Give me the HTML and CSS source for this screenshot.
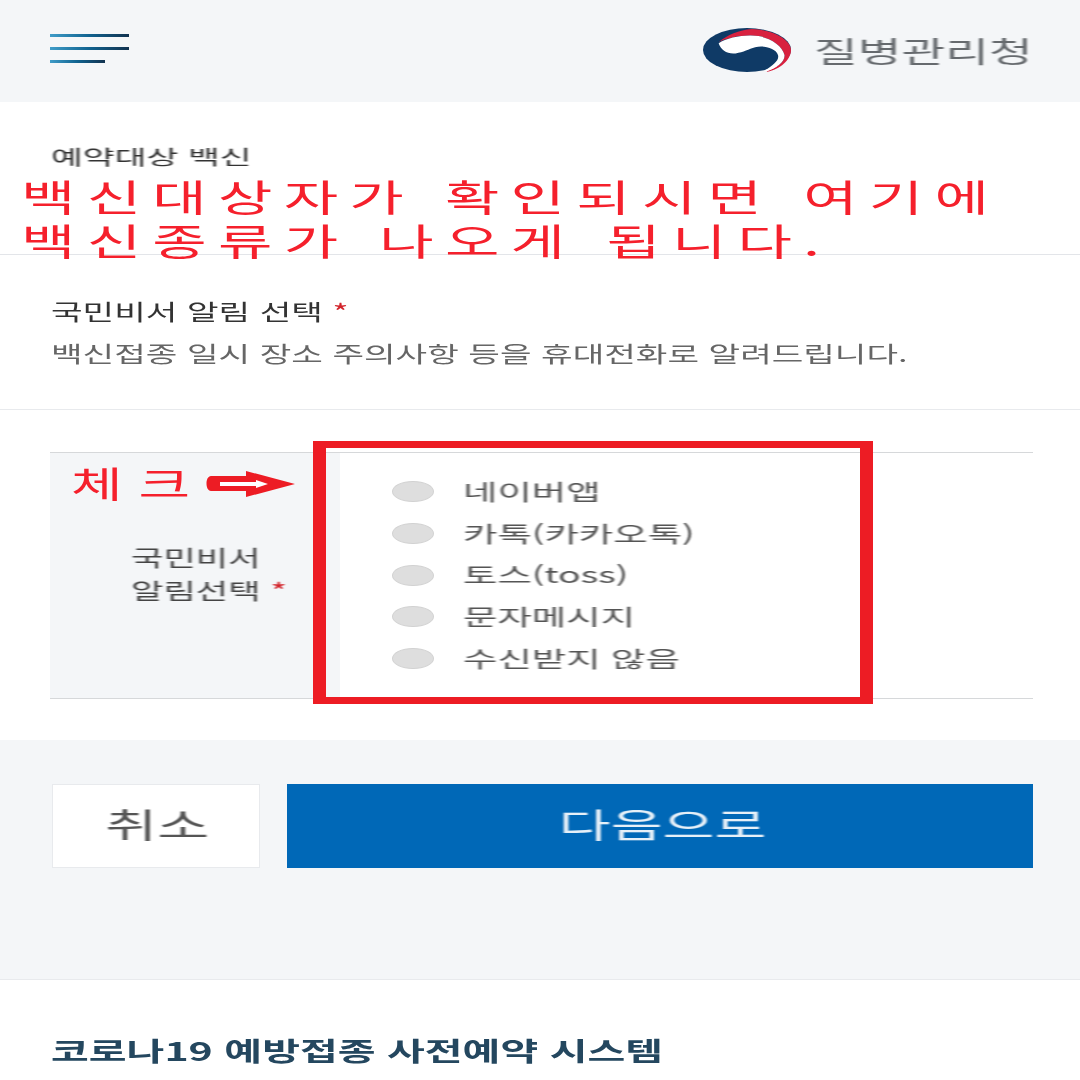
FILE: index.html
```html
<!DOCTYPE html>
<html lang="ko">
<head>
    <meta charset="UTF-8">
    <title>코로나19 예방접종 사전예약 시스템</title>
    <link rel="stylesheet" href="styles.css">
</head>
<body>
    <header class="top">
        <svg class="menu" viewBox="0 0 80 32" width="80" height="32">
            <defs>
                <linearGradient id="bar">
                    <stop offset="0" stop-color="#3f9cc8"/>
                    <stop offset="0.5" stop-color="#10628f"/>
                    <stop offset="1" stop-color="#12324f"/>
                </linearGradient>
            </defs>
            <rect x="0" y="1" width="79" height="3" fill="url(#bar)"/>
            <rect x="0" y="14" width="79" height="3" fill="url(#bar)"/>
            <rect x="0" y="27" width="55" height="3" fill="url(#bar)"/>
        </svg>
        <div class="brand">
            <svg class="mark" viewBox="0 0 270 130" width="88" height="44" preserveAspectRatio="none">
                <ellipse cx="135" cy="65" rx="135" ry="65" fill="#0f3a66"/>
                <path d="M48 42C75 20 110 6 150 3C215 5 270 35 270 65C270 95 235 122 198 129L195 128C225 118 252 100 250 80C245 55 210 30 170 24C130 18 75 28 48 42Z" fill="#d8213f"/>
                <path d="M48 45C75 28 130 18 170 24C210 30 245 55 250 80C252 100 225 118 195 128L190 125C215 110 235 95 230 80C225 62 190 50 160 57C140 62 125 72 100 75C75 78 55 65 48 45Z" fill="#fff"/>
            </svg>
            <span class="brand-name"><span class="wide">질병관리청</span></span>
        </div>
    </header>

    <section class="vaccine">
        <p class="vaccine-label"><span class="wide">예약대상 백신</span></p>
        <p class="vaccine-note"><span class="wide">백신대상자가 &nbsp;확인되시면 &nbsp;여기에<br>백신종류가 &nbsp;나오게 &nbsp;됩니다.</span></p>
    </section>

    <section class="notice">
        <h2 class="notice-title"><span class="wide">국민비서 알림 선택 <em>*</em></span></h2>
        <p class="notice-desc"><span class="wide">백신접종 일시 장소 주의사항 등을 휴대전화로 알려드립니다.</span></p>
    </section>

    <section class="choice">
        <div class="choice-table">
            <div class="choice-label">
                <span class="wide">국민비서<br>알림선택 <em>*</em></span>
            </div>
            <ul class="choice-list">
                <li><i class="radio"></i><span class="wide">네이버앱</span></li>
                <li><i class="radio"></i><span class="wide">카톡(카카오톡)</span></li>
                <li><i class="radio"></i><span class="wide">토스(toss)</span></li>
                <li><i class="radio"></i><span class="wide">문자메시지</span></li>
                <li><i class="radio"></i><span class="wide">수신받지 않음</span></li>
            </ul>
        </div>
        <!-- annotations drawn over the form -->
        <div class="red-box"></div>
        <div class="check-note">
            <span class="check-text"><span class="wide">체 크</span></span>
            <svg viewBox="0 0 90 26" width="90" height="26">
                <path d="M5 5H40V0L89 13L40 26V20H5C-1 20 -1 5 5 5Z" fill="#ed1c24"/>
                <path d="M14 11H50V9L62 13L50 17V15H14Z" fill="#fff"/>
            </svg>
        </div>
    </section>

    <section class="actions">
        <button class="btn-cancel" type="button"><span class="wide">취소</span></button>
        <button class="btn-next" type="button"><span class="wide">다음으로</span></button>
    </section>

    <footer class="bottom">
        <h3 class="bottom-title"><span class="wide">코로나19 예방접종 사전예약 시스템</span></h3>
    </footer>
</body>
</html>
```

FILE: styles.css
```css
* {
    box-sizing: border-box;
    margin: 0;
    padding: 0;
}

body {
    width: 1080px;
    height: 1080px;
    overflow: hidden;
    background-color: #ffffff;
    font-family: "Noto Sans CJK KR", "Noto Sans", sans-serif;
    color: #444444;
}

/* source picture is stretched sideways and a bit soft */
.wide {
    display: inline-block;
    white-space: nowrap;
    transform: scaleX(1.56);
    transform-origin: left center;
    filter: blur(0.5px);
}

em {
    font-style: normal;
    color: #d2232a;
}

.top {
    height: 102px;
    padding: 33px 50px 0 50px;
    background-color: #f4f6f8;
    display: flex;
    justify-content: space-between;
    align-items: flex-start;
}

.menu,
.mark {
    filter: blur(0.5px);
}

.brand {
    display: flex;
    align-items: center;
    gap: 23px;
    margin-top: -5px;
}

.brand-name {
    width: 216px;
    font-size: 29px;
    line-height: 44px;
    color: #666a6e;
}

.brand-name .wide {
    transform: scaleX(1.64);
}

.vaccine {
    height: 153px;
    padding: 40px 20px 0 21px;
    border-bottom: 1px solid #e3e5e9;
}

.vaccine-label {
    margin-left: 30px;
    font-size: 20px;
    line-height: 30px;
    color: #333333;
}

.vaccine-label .wide {
    transform: scaleX(1.73);
}

.vaccine-note {
    margin-top: 2px;
    font-size: 37px;
    line-height: 44px;
    letter-spacing: 7px;
    word-spacing: -8px;
    color: #f5202c;
}

.vaccine-note .wide {
    transform: scaleX(1.6);
    filter: none;
}

.notice {
    height: 155px;
    padding: 40px 50px 0 51px;
    border-bottom: 1px solid #e8eaed;
}

.notice-title {
    font-size: 22px;
    font-weight: 400;
    line-height: 30px;
    color: #333333;
}

.notice-desc {
    margin-top: 12px;
    font-size: 22px;
    line-height: 30px;
    color: #666666;
}

.choice {
    position: relative;
    height: 330px;
    padding: 42px 47px 0 50px;
}

.choice-table {
    height: 247px;
    display: flex;
    border-top: 1px solid #d6d8da;
    border-bottom: 1px solid #d6d8da;
}

.choice-label {
    width: 290px;
    padding: 87px 0 0 81px;
    background-color: #f4f6f8;
    font-size: 22px;
    line-height: 33px;
    color: #444444;
}

.choice-label .wide {
    transform: scaleX(1.6);
}

.choice-list {
    flex: 1;
    list-style: none;
    padding: 18px 0 0 52px;
    font-size: 22px;
    color: #555555;
}

.choice-list li {
    display: flex;
    align-items: center;
    gap: 29px;
    height: 41.700px;
    line-height: 40px;
}

.choice-list .wide {
    margin-bottom: 4px;
    transform: scaleX(1.7);
}

.radio {
    width: 42px;
    height: 21px;
    border-radius: 50%;
    background-color: #dedede;
    border: 1px solid #d2d2d2;
}

.red-box {
    position: absolute;
    left: 313px;
    top: 31px;
    width: 560px;
    height: 263px;
    border: solid #ed1c24;
    border-width: 7px 13px;
}

.check-note {
    position: absolute;
    left: 71px;
    top: 54px;
    display: flex;
    align-items: center;
    gap: 15px;
    font-size: 36px;
    line-height: 44px;
    color: #f5202c;
}

.check-text {
    width: 120px;
    margin-top: -4px;
}

.actions {
    height: 240px;
    padding: 44px 47px 0 52px;
    background-color: #f4f6f8;
    border-bottom: 1px solid #e8eaed;
    display: flex;
    align-items: flex-start;
    gap: 27px;
}

.btn-cancel,
.btn-next {
    height: 84px;
    padding-bottom: 6px;
    border: none;
    font-family: inherit;
    font-size: 34px;
    display: flex;
    justify-content: center;
    align-items: center;
}

.btn-cancel {
    width: 208px;
    padding-left: 3px;
    background-color: #ffffff;
    border: 1px solid #e8eaed;
    color: #555555;
}

.btn-next {
    flex: 1;
    padding-left: 5px;
    background-color: #0068b7;
    color: #e6f0f8;
}

.btn-cancel .wide,
.btn-next .wide {
    transform: scaleX(1.66);
    transform-origin: center;
}

.bottom {
    padding: 52px 51px 0 51px;
}

.bottom-title {
    font-size: 26px;
    font-weight: 700;
    line-height: 36px;
    color: #24475f;
}

.bottom-title .wide {
    transform: scaleX(1.58);
}
```
